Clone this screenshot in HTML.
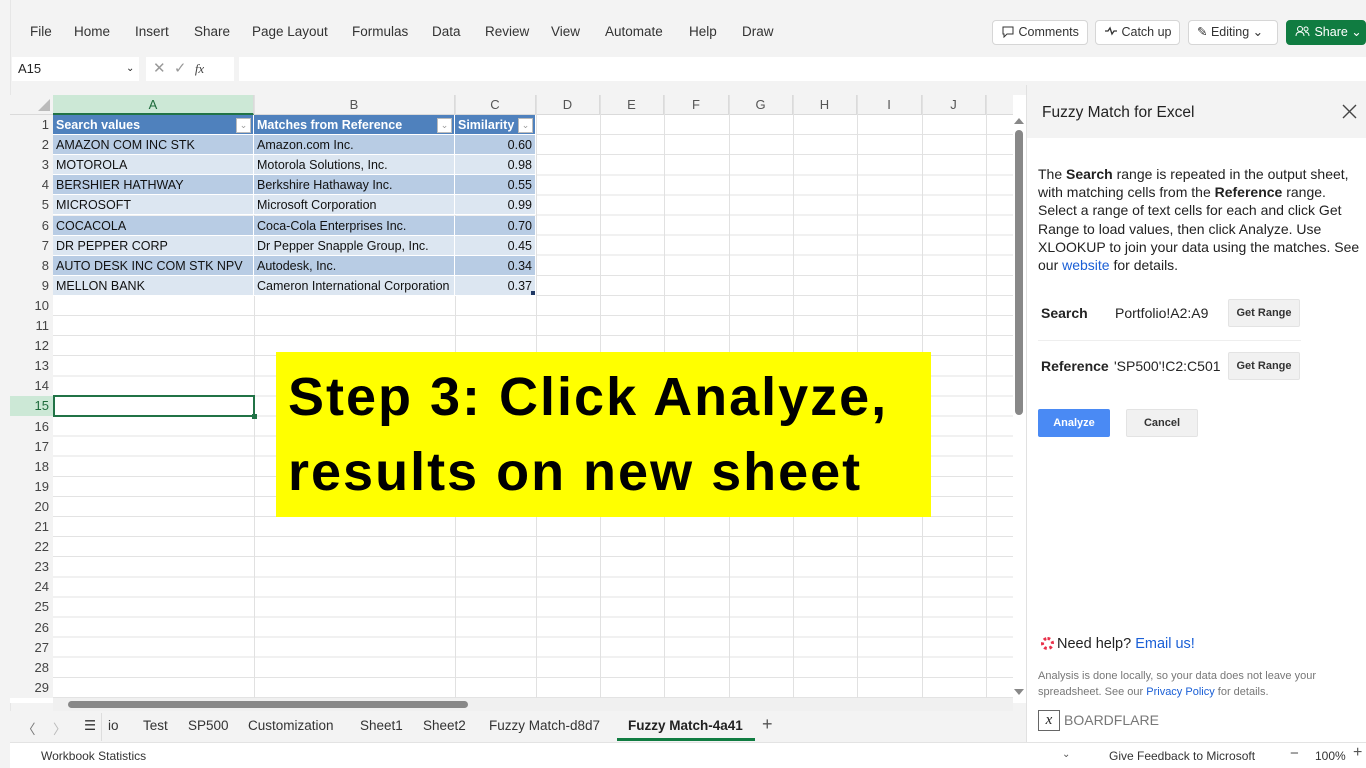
<!DOCTYPE html>
<html><head><meta charset="utf-8"><style>
*{box-sizing:border-box;margin:0;padding:0}
body{width:1366px;height:768px;overflow:hidden;background:#f3f3f3;font-family:"Liberation Sans",sans-serif;position:relative;color:#242424}
.a{position:absolute}
.menu span{position:absolute;top:24px;font-size:13.5px;color:#333}
.btn{position:absolute;top:20px;height:25px;border:1px solid #d6d6d6;border-radius:4px;background:#fff;font-size:12.5px;line-height:23px;padding-left:8px;color:#333}
.rn{position:absolute;left:10px;width:43px;height:20.1px;line-height:20px;text-align:right;padding-right:4px;font-size:13px;color:#444}
.ch{position:absolute;top:95px;height:20px;line-height:20px;text-align:center;font-size:13px;color:#555;border-right:1px solid #dadada}
.vl{position:absolute;top:95px;height:603px;width:1px;background:#e1e1e1}
.c{position:absolute;height:20.1px;line-height:20px;font-size:12.5px;padding-left:3px;white-space:nowrap;overflow:hidden;color:#111;border-bottom:1px solid #fff;border-right:1px solid #fff}
.r{text-align:right;padding-right:3px}
.tab{position:absolute;top:718px;font-size:13.5px;color:#333}
.gr{position:absolute;width:72px;height:28px;background:#f1f1f1;border:1px solid #e3e3e3;border-radius:2px;font-size:11px;font-weight:bold;text-align:center;line-height:26px;color:#333}
.dd{position:absolute;top:3px;width:15px;height:15px;background:#fff;border:1px solid #bbb;font-size:9px;line-height:13px;text-align:center;color:#999;font-weight:normal}
</style></head><body>
<div class="a" style="left:0;top:0;width:10px;height:768px;background:#f3f3f3"></div>
<div class="a" style="left:10px;top:0;width:1px;height:768px;background:#e6e6e6"></div>
<div class="menu">
<span style="left:30px">File</span><span style="left:74px">Home</span><span style="left:135px">Insert</span><span style="left:194px">Share</span><span style="left:252px">Page Layout</span><span style="left:352px">Formulas</span><span style="left:432px">Data</span><span style="left:485px">Review</span><span style="left:551px">View</span><span style="left:605px">Automate</span><span style="left:689px">Help</span><span style="left:742px">Draw</span>
</div>
<div class="btn" style="left:992px;width:96px"><svg width="14" height="13" style="vertical-align:-2px"><path d="M2 2h10v7H6l-3 3V9H2z" fill="none" stroke="#333"/></svg> Comments</div>
<div class="btn" style="left:1095px;width:85px"><svg width="14" height="10" style="vertical-align:0"><path d="M1 5h3l2-3 2 6 2-3h3" fill="none" stroke="#333" stroke-width="1.3"/></svg> Catch up</div>
<div class="btn" style="left:1188px;width:90px">✎ Editing ⌄</div>
<div class="btn" style="left:1286px;width:80px;background:#107c41;border-color:#107c41;color:#fff"><svg width="16" height="12" style="vertical-align:-1px"><circle cx="5" cy="4" r="2.5" fill="none" stroke="#fff"/><path d="M1 11c0-3 2-4 4-4s4 1 4 4" fill="none" stroke="#fff"/><circle cx="11" cy="4" r="2" fill="none" stroke="#fff"/><path d="M10 7c2 0 4 1 4 4" fill="none" stroke="#fff"/></svg> Share ⌄</div>
<div class="a" style="left:12px;top:57px;width:127px;height:24px;background:#fff;font-size:13px;line-height:24px;padding-left:6px">A15<span style="position:absolute;left:114px;font-size:10px">⌄</span></div>
<div class="a" style="left:146px;top:57px;width:88px;height:24px;background:#fff;color:#999;font-size:15px;line-height:24px;padding-left:7px">✕ &nbsp;✓ &nbsp;<i style="color:#444;font-size:13px;font-family:'Liberation Serif',serif">fx</i></div>
<div class="a" style="left:239px;top:57px;width:1127px;height:24px;background:#fff"></div>
<div class="a" style="left:10px;top:95px;width:1016px;height:608px;background:#fff"></div>
<div class="a" style="left:10px;top:95px;width:43px;height:603px;background:#f3f3f3"></div>
<div class="a" style="left:10px;top:95px;width:1003px;height:20px;background:#f3f3f3;border-bottom:1px solid #dadada"></div>
<div class="a" style="left:53px;top:115px;width:960px;height:583px;background:repeating-linear-gradient(to bottom,transparent 0,transparent 19.1px,#e3e3e3 19.1px,#e3e3e3 20.1px)"></div>
<div class="vl" style="left:254px"></div><div class="vl" style="left:455px"></div><div class="vl" style="left:536px"></div><div class="vl" style="left:600px"></div><div class="vl" style="left:664px"></div><div class="vl" style="left:729px"></div><div class="vl" style="left:793px"></div><div class="vl" style="left:857px"></div><div class="vl" style="left:922px"></div><div class="vl" style="left:986px"></div>
<div class="a" style="left:38px;top:99px;width:0;height:0;border-left:12px solid transparent;border-bottom:12px solid #bbb"></div>
<div class="ch" style="left:53px;width:201px;background:#cce8d6;color:#1e6b3c;border-bottom:2px solid #217346">A</div>
<div class="ch" style="left:254px;width:201px">B</div><div class="ch" style="left:455px;width:81px">C</div><div class="ch" style="left:536px;width:64px">D</div><div class="ch" style="left:600px;width:64px">E</div><div class="ch" style="left:664px;width:65px">F</div><div class="ch" style="left:729px;width:64px">G</div><div class="ch" style="left:793px;width:64px">H</div><div class="ch" style="left:857px;width:65px">I</div><div class="ch" style="left:922px;width:64px">J</div>
<div class="a" style="left:10px;top:115px">
<div class="rn" style="top:0px;left:0">1</div><div class="rn" style="top:20.1px;left:0">2</div><div class="rn" style="top:40.2px;left:0">3</div><div class="rn" style="top:60.3px;left:0">4</div><div class="rn" style="top:80.4px;left:0">5</div><div class="rn" style="top:100.5px;left:0">6</div><div class="rn" style="top:120.6px;left:0">7</div><div class="rn" style="top:140.7px;left:0">8</div><div class="rn" style="top:160.8px;left:0">9</div><div class="rn" style="top:180.9px;left:0">10</div><div class="rn" style="top:201px;left:0">11</div><div class="rn" style="top:221.1px;left:0">12</div><div class="rn" style="top:241.2px;left:0">13</div><div class="rn" style="top:261.3px;left:0">14</div><div class="rn" style="top:281.4px;left:0;background:#cce8d6;color:#1e6b3c">15</div><div class="rn" style="top:301.5px;left:0">16</div><div class="rn" style="top:321.6px;left:0">17</div><div class="rn" style="top:341.7px;left:0">18</div><div class="rn" style="top:361.8px;left:0">19</div><div class="rn" style="top:381.9px;left:0">20</div><div class="rn" style="top:402px;left:0">21</div><div class="rn" style="top:422.1px;left:0">22</div><div class="rn" style="top:442.2px;left:0">23</div><div class="rn" style="top:462.3px;left:0">24</div><div class="rn" style="top:482.4px;left:0">25</div><div class="rn" style="top:502.5px;left:0">26</div><div class="rn" style="top:522.6px;left:0">27</div><div class="rn" style="top:542.7px;left:0">28</div><div class="rn" style="top:562.8px;left:0">29</div>
</div>
<div class="a" style="left:53px;top:115px">
<div class="c" style="top:0;left:0;width:201px;background:#4f81bd;color:#fff;font-weight:bold">Search values<div class="dd" style="left:183px">⌄</div></div>
<div class="c" style="top:0;left:201px;width:201px;background:#4f81bd;color:#fff;font-weight:bold">Matches from Reference<div class="dd" style="left:183px">⌄</div></div>
<div class="c" style="top:0;left:402px;width:81px;background:#4f81bd;color:#fff;font-weight:bold">Similarity<div class="dd" style="left:63px">⌄</div></div>
<div class="c" style="top:20.1px;left:0;width:201px;background:#b8cce4">AMAZON COM INC STK</div><div class="c" style="top:20.1px;left:201px;width:201px;background:#b8cce4">Amazon.com Inc.</div><div class="c r" style="top:20.1px;left:402px;width:81px;background:#b8cce4">0.60</div>
<div class="c" style="top:40.2px;left:0;width:201px;background:#dce6f1">MOTOROLA</div><div class="c" style="top:40.2px;left:201px;width:201px;background:#dce6f1">Motorola Solutions, Inc.</div><div class="c r" style="top:40.2px;left:402px;width:81px;background:#dce6f1">0.98</div>
<div class="c" style="top:60.3px;left:0;width:201px;background:#b8cce4">BERSHIER HATHWAY</div><div class="c" style="top:60.3px;left:201px;width:201px;background:#b8cce4">Berkshire Hathaway Inc.</div><div class="c r" style="top:60.3px;left:402px;width:81px;background:#b8cce4">0.55</div>
<div class="c" style="top:80.4px;left:0;width:201px;background:#dce6f1">MICROSOFT</div><div class="c" style="top:80.4px;left:201px;width:201px;background:#dce6f1">Microsoft Corporation</div><div class="c r" style="top:80.4px;left:402px;width:81px;background:#dce6f1">0.99</div>
<div class="c" style="top:100.5px;left:0;width:201px;background:#b8cce4">COCACOLA</div><div class="c" style="top:100.5px;left:201px;width:201px;background:#b8cce4">Coca-Cola Enterprises Inc.</div><div class="c r" style="top:100.5px;left:402px;width:81px;background:#b8cce4">0.70</div>
<div class="c" style="top:120.6px;left:0;width:201px;background:#dce6f1">DR PEPPER CORP</div><div class="c" style="top:120.6px;left:201px;width:201px;background:#dce6f1">Dr Pepper Snapple Group, Inc.</div><div class="c r" style="top:120.6px;left:402px;width:81px;background:#dce6f1">0.45</div>
<div class="c" style="top:140.7px;left:0;width:201px;background:#b8cce4">AUTO DESK INC COM STK NPV</div><div class="c" style="top:140.7px;left:201px;width:201px;background:#b8cce4">Autodesk, Inc.</div><div class="c r" style="top:140.7px;left:402px;width:81px;background:#b8cce4">0.34</div>
<div class="c" style="top:160.8px;left:0;width:201px;background:#dce6f1">MELLON BANK</div><div class="c" style="top:160.8px;left:201px;width:201px;background:#dce6f1">Cameron International Corporation</div><div class="c r" style="top:160.8px;left:402px;width:81px;background:#dce6f1">0.37</div>
</div>
<div class="a" style="left:531px;top:291px;width:4px;height:4px;background:#1f3864"></div>
<div class="a" style="left:53px;top:395px;width:202px;height:22px;border:2px solid #217346"></div>
<div class="a" style="left:252px;top:414px;width:5px;height:5px;background:#217346"></div>
<div class="a" style="left:276px;top:352px;width:655px;height:165px;background:#ffff00;font-weight:bold;font-size:54px;line-height:75px;padding:8px 0 0 12px;color:#000;font-family:'Liberation Sans',sans-serif;letter-spacing:2px;white-space:nowrap">Step 3: Click Analyze,<br>results on new sheet</div>
<div class="a" style="left:1013px;top:115px;width:13px;height:583px;background:#fff"></div>
<div class="a" style="left:1015px;top:130px;width:8px;height:285px;background:#888;border-radius:4px"></div>
<div class="a" style="left:1014px;top:118px;border-left:5px solid transparent;border-right:5px solid transparent;border-bottom:6px solid #888"></div>
<div class="a" style="left:1014px;top:689px;border-left:5px solid transparent;border-right:5px solid transparent;border-top:6px solid #888"></div>
<div class="a" style="left:53px;top:698px;width:960px;height:13px;background:#f0f0f0"></div>
<div class="a" style="left:68px;top:701px;width:400px;height:7px;background:#888;border-radius:4px"></div>
<div class="a" style="left:10px;top:711px;width:1016px;height:31px;background:#f3f3f3"></div>
<span class="tab" style="left:22px;color:#777">〈</span><span class="tab" style="left:53px;color:#bbb">〉</span><span class="tab" style="left:84px">☰</span>
<div class="a" style="left:101px;top:713px;width:1px;height:28px;background:#ddd"></div>
<span class="tab" style="left:108px">io</span><span class="tab" style="left:143px">Test</span><span class="tab" style="left:188px">SP500</span><span class="tab" style="left:248px">Customization</span><span class="tab" style="left:360px">Sheet1</span><span class="tab" style="left:423px">Sheet2</span><span class="tab" style="left:489px">Fuzzy Match-d8d7</span><span class="tab" style="left:628px;font-weight:bold;color:#222">Fuzzy Match-4a41</span>
<div class="a" style="left:617px;top:738px;width:138px;height:3px;background:#107c41"></div>
<span class="tab" style="left:762px;font-size:18px;top:714px;color:#555">+</span>
<div class="a" style="left:10px;top:742px;width:1356px;height:26px;background:#fff;border-top:1px solid #e3e3e3"></div>
<span class="a" style="left:41px;top:749px;font-size:12px;color:#333">Workbook Statistics</span>
<span class="a" style="left:1062px;top:749px;font-size:10px;color:#555">⌄</span>
<span class="a" style="left:1109px;top:749px;font-size:12px;color:#333">Give Feedback to Microsoft</span>
<span class="a" style="left:1290px;top:745px;font-size:15px;color:#555">−</span>
<span class="a" style="left:1315px;top:749px;font-size:12px;color:#333">100%</span>
<span class="a" style="left:1353px;top:744px;font-size:16px;color:#555">+</span>
<div class="a" style="left:1026px;top:85px;width:340px;height:657px;background:#fff;border-left:1px solid #e1e1e1"></div>
<div class="a" style="left:1027px;top:85px;width:339px;height:53px;background:#f3f3f3"></div>
<span class="a" style="left:1042px;top:104px;font-size:15.5px;color:#222">Fuzzy Match for Excel</span>
<svg class="a" style="left:1342px;top:104px" width="15" height="15"><path d="M1 1l13 13M14 1L1 14" stroke="#444" stroke-width="1.4"/></svg>
<div class="a" style="left:1038px;top:165px;width:328px;font-size:14px;line-height:18.2px;color:#222">The <b>Search</b> range is repeated in the output sheet, with matching cells from the <b>Reference</b> range. Select a range of text cells for each and click Get Range to load values, then click Analyze. Use XLOOKUP to join your data using the matches. See our <span style="color:#1a5fd6">website</span> for details.</div>
<span class="a" style="left:1041px;top:305px;font-size:14px;font-weight:bold">Search</span>
<span class="a" style="left:1115px;top:305px;font-size:14px">Portfolio!A2:A9</span>
<div class="gr" style="left:1228px;top:299px">Get Range</div>
<div class="a" style="left:1038px;top:340px;width:263px;height:1px;background:#eee"></div>
<span class="a" style="left:1041px;top:358px;font-size:14px;font-weight:bold">Reference</span>
<span class="a" style="left:1114px;top:358px;font-size:14px">'SP500'!C2:C501</span>
<div class="gr" style="left:1228px;top:352px">Get Range</div>
<div class="gr" style="left:1038px;top:409px;background:#4a8af4;border-color:#4a8af4;color:#fff">Analyze</div>
<div class="gr" style="left:1126px;top:409px">Cancel</div>
<div class="a" style="left:1041px;top:637px;width:13px;height:13px;border:3px dotted #e8304a;border-radius:50%"></div>
<span class="a" style="left:1057px;top:636px;font-size:14.5px;color:#222">Need help? <span style="color:#1a5fd6">Email us!</span></span>
<div class="a" style="left:1038px;top:668px;width:320px;font-size:11px;line-height:16px;color:#777">Analysis is done locally, so your data does not leave your spreadsheet. See our <span style="color:#1a5fd6">Privacy Policy</span> for details.</div>
<div class="a" style="left:1038px;top:710px;width:22px;height:21px;border:1px solid #666;font-family:'Liberation Serif',serif;font-style:italic;font-size:15px;text-align:center;line-height:19px">x</div>
<span class="a" style="left:1064px;top:712px;font-size:14px;color:#777">BOARDFLARE</span>
</body></html>
